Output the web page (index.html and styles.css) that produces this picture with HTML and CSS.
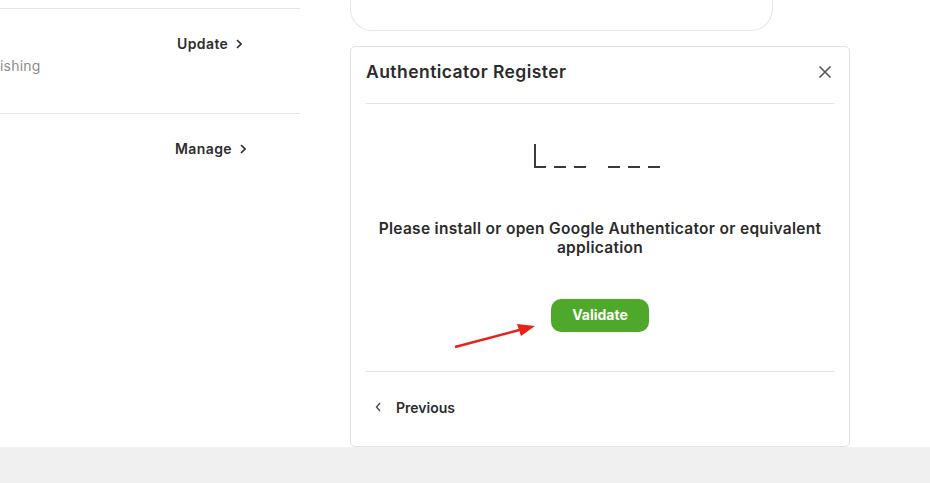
FILE: index.html
```html
<!DOCTYPE html>
<html>
<head>
<meta charset="utf-8">
<link rel="stylesheet" href="styles.css">
</head>
<body>
<div class="page">
  <div class="left">
    <div class="row">
      <div class="row-action a1">Update <svg class="chev" width="6" height="10" viewBox="0 0 6 10"><path d="M1 1L5 5L1 9" stroke="#2d2d2d" stroke-width="1.6" fill="none"/></svg></div>
      <div class="row-sub">ishing</div>
    </div>
    <div class="row">
      <div class="row-action a2">Manage <svg class="chev" width="6" height="10" viewBox="0 0 6 10"><path d="M1 1L5 5L1 9" stroke="#2d2d2d" stroke-width="1.6" fill="none"/></svg></div>
    </div>
  </div>
  <div class="right">
    <div class="top-card"></div>
    <div class="modal">
      <div class="modal-head">
        <div class="modal-title">Authenticator Register</div>
        <svg class="close" width="14" height="14" viewBox="0 0 14 14"><path d="M1.5 1.5L12.5 12.5M12.5 1.5L1.5 12.5" stroke="#555" stroke-width="1.6" fill="none"/></svg>
      </div>
      <div class="modal-body">
        <div class="otp">
          <div class="otp-group">
            <span class="slot active"></span><span class="slot"></span><span class="slot"></span>
          </div>
          <div class="otp-group">
            <span class="slot"></span><span class="slot"></span><span class="slot"></span>
          </div>
        </div>
        <p class="msg">Please install or open Google Authenticator or equivalent application</p>
        <button class="validate">Validate</button>
        <svg class="arrow" width="90" height="30" viewBox="0 0 90 30"><path d="M4 26L72 8" stroke="#e8221b" stroke-width="2.4" fill="none"/><path d="M84 5L66 3L70 15Z" fill="#e8221b"/></svg>
      </div>
      <div class="modal-foot">
        <svg class="prev-chev" width="6" height="10" viewBox="0 0 6 10"><path d="M5 1L1.5 5L5 9" stroke="#444" stroke-width="1.3" fill="none"/></svg><span class="prev">Previous</span>
      </div>
    </div>
  </div>
</div>
<div class="bottom"></div>
</body>
</html>
```
FILE: styles.css
```css
html, body { margin: 0; padding: 0; }
body {
  width: 930px;
  height: 483px;
  overflow: hidden;
  font-family: "Inter", "Open Sans", sans-serif;
  color: #2b2b2b;
  background: #fff;
}
.page {
  display: flex;
  height: 447px;
  background: #fff;
}
.left {
  width: 300px;
  padding-top: 8px;
}
.row {
  position: relative;
  height: 104px;
  border-top: 1px solid #e6e6e6;
}
.row-action {
  position: absolute;
  display: flex;
  align-items: center;
  gap: 8px;
  font-size: 14px;
  font-weight: 600;
  letter-spacing: 0.4px;
  color: #2d2d2d;
}
.a1 { left: 177px; top: 26px; }
.a2 { left: 175px; top: 26px; }
.chev { display: block; margin-top: 1px; }
.row-sub {
  position: absolute;
  left: 0;
  top: 48px;
  font-size: 14px;
  letter-spacing: 0.2px;
  color: #8c8c8c;
}
.right {
  margin-left: 50px;
  width: 500px;
}
.top-card {
  width: 421px;
  height: 30px;
  border: 1px solid #e6e6e6;
  border-top: none;
  border-radius: 0 0 22px 22px;
}
.modal {
  margin-top: 15px;
  height: 399px;
  border: 1px solid #e3e3e3;
  border-radius: 5px;
  padding: 0 15px;
  display: flex;
  flex-direction: column;
}
.modal-head {
  height: 57px;
  box-sizing: border-box;
  padding-bottom: 7px;
  border-bottom: 1px solid #e3e3e3;
  display: flex;
  align-items: center;
  justify-content: space-between;
}
.modal-title {
  font-size: 17.5px;
  font-weight: 600;
  color: #2b2b2b;
  letter-spacing: 0.45px;
}
.close { margin-right: 2px; }
.modal-body {
  position: relative;
  height: 267px;
  border-bottom: 1px solid #e3e3e3;
  display: flex;
  flex-direction: column;
  align-items: center;
}
.otp {
  margin-top: 40px;
  margin-right: 7px;
  display: flex;
  gap: 22px;
}
.otp-group { display: flex; gap: 8px; }
.slot {
  display: block;
  width: 12px;
  height: 24px;
  border-bottom: 2px solid #3a3a3a;
  box-sizing: border-box;
}
.slot.active { border-left: 2px solid #3a3a3a; }
.msg {
  margin: 51px 0 0;
  width: 460px;
  text-align: center;
  font-size: 15.5px;
  font-weight: 600;
  line-height: 19px;
  letter-spacing: 0.3px;
  color: #2b2b2b;
}
.validate {
  margin-top: 42px;
  width: 98px;
  height: 33px;
  padding-bottom: 3px;
  border: none;
  border-radius: 10px;
  background: #4ea92a;
  color: #fff;
  font-family: inherit;
  font-size: 14px;
  font-weight: 700;
}
.arrow {
  position: absolute;
  left: 85px;
  top: 217px;
}
.modal-foot {
  flex: 1;
  display: flex;
  align-items: center;
  padding-left: 9px;
  padding-bottom: 4px;
}
.prev-chev {
  display: block;
  margin-right: 15px;
}
.prev {
  font-size: 14px;
  font-weight: 600;
  color: #2b2b2b;
}
.bottom {
  height: 36px;
  background: #f0f0f0;
}
```
